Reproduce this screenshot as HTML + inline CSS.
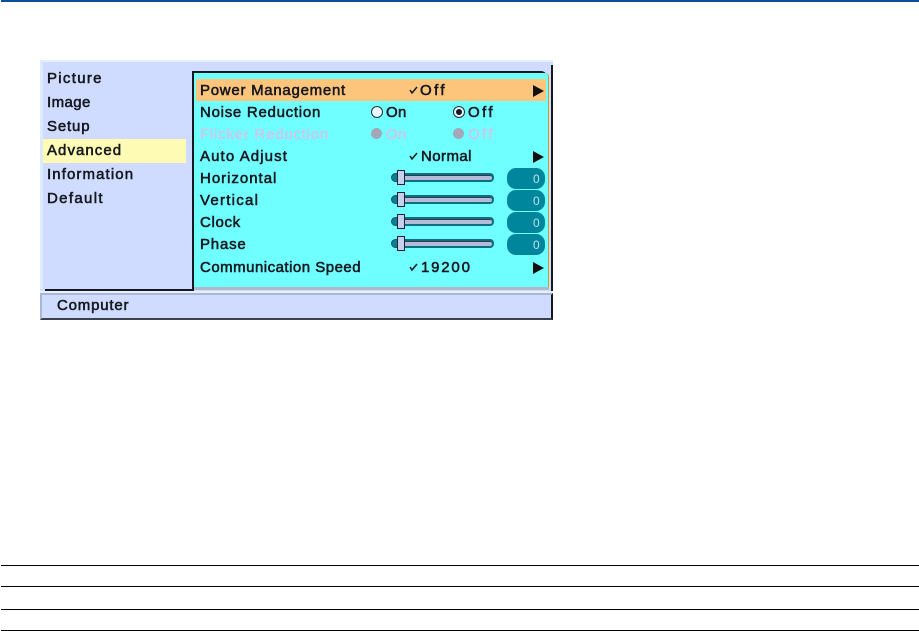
<!DOCTYPE html>
<html><head><meta charset="utf-8"><style>
html,body{margin:0;padding:0;background:#fff;width:919px;height:631px;overflow:hidden}
div,span{position:absolute;box-sizing:border-box}
.t{font-family:"Liberation Sans",sans-serif;font-size:15px;line-height:18px;height:18px;color:#15181f;white-space:nowrap;-webkit-text-stroke:.55px #15181f}
.d{color:#c9c9ea;-webkit-text-stroke:.55px #c9c9ea}
.l{left:1px;width:918px;height:1px;background:#000}
.track{left:393px;width:101px;height:9px;background:#b4bcd8;border:2px solid #0d6f80;border-radius:4px;box-shadow:inset 0 1px 0 #333a50}
.nub{left:391px;width:9px;height:9px;background:#0d7f92;border-radius:50%;border:1px solid #0a5a68}
.thumb{left:397px;width:8px;height:15px;background:#c5cfee;border:1px solid #223;}
.pill{left:507px;width:38px;height:21px;background:#00869c;border-radius:9px}
.v{left:533px;font-family:"Liberation Sans",sans-serif;font-size:12px;line-height:14px;color:#b5e4ec}
.arrow{left:533px;width:0;height:0;border-left:11px solid #111;border-top:6px solid transparent;border-bottom:6px solid transparent}
.ck{left:409px;width:9px;height:8px}
</style></head><body>
<div style="left:1px;top:0;width:918px;height:2px;background:#0b4f9c"></div>

<div style="left:40px;top:60px;width:513px;height:260px;background:#cfdcff"></div>
<div style="left:40px;top:60px;width:513px;height:2px;background:#e3f2ff"></div>
<div style="left:40px;top:60px;width:3px;height:229px;background:#dcebff"></div>
<div style="left:551px;top:65px;width:2px;height:255px;background:#15181f"></div>
<div style="left:43px;top:139px;width:143px;height:24px;background:#fdfbb4"></div>

<div style="left:192px;top:71px;width:355px;height:218px;background:#15181f;border-radius:0 6px 0 0"></div>
<div style="left:194px;top:73px;width:355px;height:215px;background:#70ffff;border-right:1px solid #c7a020;border-radius:0 4px 0 0"></div>
<div style="left:194px;top:287px;width:355px;height:3px;background:#aeb8c6"></div>
<div style="left:196px;top:79px;width:350px;height:22px;background:#fdc57c"></div>

<div style="left:45px;top:289px;width:149px;height:2px;background:#15181f"></div>
<div style="left:40px;top:291px;width:513px;height:2px;background:#e8f0ff"></div>
<div style="left:40px;top:293px;width:513px;height:27px;background:#cfdcff;border-top:2px solid #a9b8d2;border-left:2px solid #a9b8d2;border-right:2px solid #15181f;border-bottom:2px solid #3a404e"></div>

<span class="t" style="left:47px;top:70px;letter-spacing:1.3px">Picture</span>
<span class="t" style="left:47px;top:94px;letter-spacing:.42px">Image</span>
<span class="t" style="left:47px;top:118px;letter-spacing:.84px">Setup</span>
<span class="t" style="left:47px;top:142px;letter-spacing:1.05px">Advanced</span>
<span class="t" style="left:47px;top:166px;letter-spacing:1.1px">Information</span>
<span class="t" style="left:47px;top:190px;letter-spacing:1.34px">Default</span>
<span class="t" style="left:57px;top:297px;letter-spacing:.8px">Computer</span>

<span class="t" style="left:200px;top:82px;letter-spacing:.73px">Power Management</span>
<span class="t" style="left:200px;top:104px;letter-spacing:.73px">Noise Reduction</span>
<span class="t d" style="left:200px;top:126px;letter-spacing:.76px">Flicker Reduction</span>
<span class="t" style="left:200px;top:148px;letter-spacing:1.1px">Auto Adjust</span>
<span class="t" style="left:200px;top:170px;letter-spacing:.98px">Horizontal</span>
<span class="t" style="left:200px;top:192px;letter-spacing:1.25px">Vertical</span>
<span class="t" style="left:200px;top:214px;letter-spacing:.65px">Clock</span>
<span class="t" style="left:200px;top:236px;letter-spacing:.8px">Phase</span>
<span class="t" style="left:200px;top:259px;letter-spacing:.49px">Communication Speed</span>

<svg class="ck" style="position:absolute;top:86px" viewBox="0 0 9 8"><path d="M1 4l2 3 5-6" fill="none" stroke="#15181f" stroke-width="1.5"/></svg>
<span class="t" style="left:420px;top:82px;letter-spacing:2.4px">Off</span>
<svg class="ck" style="position:absolute;top:152px" viewBox="0 0 9 8"><path d="M1 4l2 3 5-6" fill="none" stroke="#15181f" stroke-width="1.5"/></svg>
<span class="t" style="left:421px;top:148px;letter-spacing:.43px">Normal</span>
<svg class="ck" style="position:absolute;top:263px" viewBox="0 0 9 8"><path d="M1 4l2 3 5-6" fill="none" stroke="#15181f" stroke-width="1.5"/></svg>
<span class="t" style="left:421px;top:259px;letter-spacing:1.8px">19200</span>

<div style="left:371px;top:106px;width:12px;height:12px;border-radius:50%;background:#e8f6ff;border:1px solid #22303a"></div>
<span class="t" style="left:386px;top:104px;letter-spacing:.35px">On</span>
<div style="left:453px;top:106px;width:12px;height:12px;border-radius:50%;background:#e8f6ff;border:1px solid #22303a"></div>
<div style="left:456px;top:109px;width:6px;height:6px;border-radius:50%;background:#15181f"></div>
<span class="t" style="left:468px;top:104px;letter-spacing:2.4px">Off</span>

<div style="left:371px;top:128px;width:11px;height:11px;border-radius:50%;background:#a2a8b8"></div>
<span class="t d" style="left:386px;top:126px;letter-spacing:.35px">On</span>
<div style="left:453px;top:128px;width:11px;height:11px;border-radius:50%;background:#a2a8b8"></div>
<span class="t d" style="left:468px;top:126px;letter-spacing:2.4px">Off</span>

<div class="arrow" style="top:85px"></div>
<div class="arrow" style="top:151px"></div>
<div class="arrow" style="top:262px"></div>

<div class="track" style="top:173px"></div><div class="nub" style="top:173px"></div><div class="thumb" style="top:170px"></div>
<div class="track" style="top:195px"></div><div class="nub" style="top:195px"></div><div class="thumb" style="top:192px"></div>
<div class="track" style="top:217px"></div><div class="nub" style="top:217px"></div><div class="thumb" style="top:214px"></div>
<div class="track" style="top:239px"></div><div class="nub" style="top:239px"></div><div class="thumb" style="top:236px"></div>

<div class="pill" style="top:168px"></div><span class="v" style="top:172px">0</span>
<div class="pill" style="top:190px"></div><span class="v" style="top:194px">0</span>
<div class="pill" style="top:212px"></div><span class="v" style="top:216px">0</span>
<div class="pill" style="top:234px"></div><span class="v" style="top:238px">0</span>

<div class="l" style="top:565px"></div>
<div class="l" style="top:586px"></div>
<div class="l" style="top:609px"></div>
<div class="l" style="top:630px"></div>
</body></html>
